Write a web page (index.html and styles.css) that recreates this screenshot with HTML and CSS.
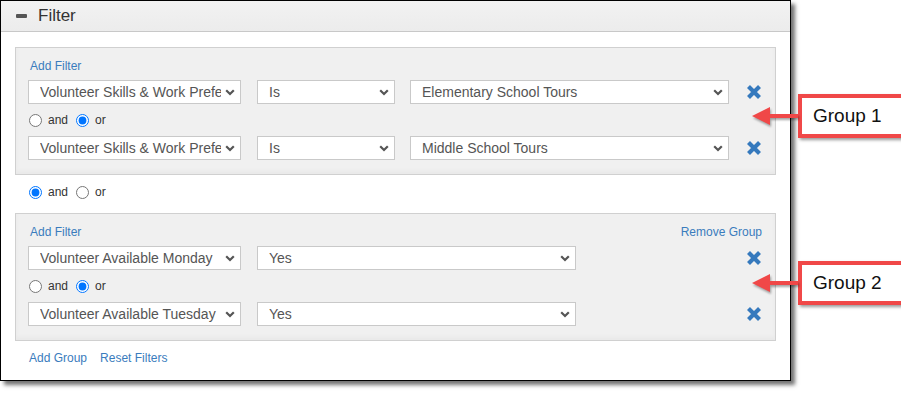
FILE: index.html
```html
<!DOCTYPE html>
<html lang="en">
<head>
    <meta charset="UTF-8">
    <title>Filter</title>
    <link rel="stylesheet" href="styles.css">
</head>
<body>

    <div class="panel">
        <div class="panel-head">
            <span class="collapse-icon"></span>
            <span class="panel-title">Filter</span>
        </div>
        <div class="panel-body">

            <div class="group">
                <div class="group-top">
                    <a class="link" href="#">Add Filter</a>
                </div>
                <div class="filter-row">
                    <div class="select field"><span class="select-text">Volunteer Skills &amp; Work Preferences</span><svg class="chevron" width="10" height="7" viewBox="0 0 10 7"><path d="M1.2 1.2 L5 5 L8.8 1.2" /></svg></div>
                    <div class="select op"><span class="select-text">Is</span><svg class="chevron" width="10" height="7" viewBox="0 0 10 7"><path d="M1.2 1.2 L5 5 L8.8 1.2" /></svg></div>
                    <div class="select value"><span class="select-text">Elementary School Tours</span><svg class="chevron" width="10" height="7" viewBox="0 0 10 7"><path d="M1.2 1.2 L5 5 L8.8 1.2" /></svg></div>
                    <svg class="remove" width="16" height="16" viewBox="0 0 16 16"><path d="M2.5 2.5 L13.5 13.5 M13.5 2.5 L2.5 13.5" /></svg>
                </div>
                <div class="conj">
                    <label><input type="radio" name="c1"> and</label>
                    <label><input type="radio" name="c1" checked> or</label>
                </div>
                <div class="filter-row">
                    <div class="select field"><span class="select-text">Volunteer Skills &amp; Work Preferences</span><svg class="chevron" width="10" height="7" viewBox="0 0 10 7"><path d="M1.2 1.2 L5 5 L8.8 1.2" /></svg></div>
                    <div class="select op"><span class="select-text">Is</span><svg class="chevron" width="10" height="7" viewBox="0 0 10 7"><path d="M1.2 1.2 L5 5 L8.8 1.2" /></svg></div>
                    <div class="select value"><span class="select-text">Middle School Tours</span><svg class="chevron" width="10" height="7" viewBox="0 0 10 7"><path d="M1.2 1.2 L5 5 L8.8 1.2" /></svg></div>
                    <svg class="remove" width="16" height="16" viewBox="0 0 16 16"><path d="M2.5 2.5 L13.5 13.5 M13.5 2.5 L2.5 13.5" /></svg>
                </div>
            </div>

            <div class="conj outer">
                <label><input type="radio" name="c0" checked> and</label>
                <label><input type="radio" name="c0"> or</label>
            </div>

            <div class="group">
                <div class="group-top">
                    <a class="link" href="#">Add Filter</a>
                    <a class="link" href="#">Remove Group</a>
                </div>
                <div class="filter-row">
                    <div class="select field"><span class="select-text">Volunteer Available Monday</span><svg class="chevron" width="10" height="7" viewBox="0 0 10 7"><path d="M1.2 1.2 L5 5 L8.8 1.2" /></svg></div>
                    <div class="select value"><span class="select-text">Yes</span><svg class="chevron" width="10" height="7" viewBox="0 0 10 7"><path d="M1.2 1.2 L5 5 L8.8 1.2" /></svg></div>
                    <svg class="remove push" width="16" height="16" viewBox="0 0 16 16"><path d="M2.5 2.5 L13.5 13.5 M13.5 2.5 L2.5 13.5" /></svg>
                </div>
                <div class="conj">
                    <label><input type="radio" name="c2"> and</label>
                    <label><input type="radio" name="c2" checked> or</label>
                </div>
                <div class="filter-row">
                    <div class="select field"><span class="select-text">Volunteer Available Tuesday</span><svg class="chevron" width="10" height="7" viewBox="0 0 10 7"><path d="M1.2 1.2 L5 5 L8.8 1.2" /></svg></div>
                    <div class="select value"><span class="select-text">Yes</span><svg class="chevron" width="10" height="7" viewBox="0 0 10 7"><path d="M1.2 1.2 L5 5 L8.8 1.2" /></svg></div>
                    <svg class="remove push" width="16" height="16" viewBox="0 0 16 16"><path d="M2.5 2.5 L13.5 13.5 M13.5 2.5 L2.5 13.5" /></svg>
                </div>
            </div>

            <div class="panel-foot">
                <a class="link" href="#">Add Group</a>
                <a class="link" href="#">Reset Filters</a>
            </div>
        </div>
    </div>

    <!-- Callouts -->
    <div class="callout callout-1">
        <svg class="callout-arrow" width="46" height="22" viewBox="0 0 46 22"><polygon points="0,11 18,2 18,20" /><rect x="16" y="9" width="30" height="4" /></svg>
        <div class="callout-box">Group 1</div>
    </div>
    <div class="callout callout-2">
        <svg class="callout-arrow" width="46" height="22" viewBox="0 0 46 22"><polygon points="0,11 18,2 18,20" /><rect x="16" y="9" width="30" height="4" /></svg>
        <div class="callout-box">Group 2</div>
    </div>

</body>
</html>
```

FILE: styles.css
```css
body {
    margin: 0;
    font-family: 'Liberation Sans', Arial, sans-serif;
    background: #fff;
    width: 901px;
    height: 396px;
    position: relative;
    overflow: hidden;
}
.panel {
    width: 789px;
    height: 379px;
    border: 1px solid #000;
    background: #fff;
    box-shadow: 4px 4px 4px rgba(0, 0, 0, 0.55);
}
.panel-head {
    height: 30px;
    display: flex;
    align-items: center;
    background: linear-gradient(#f2f2f2, #ececec);
    border-bottom: 1px solid #c8c8c8;
    padding-left: 15px;
}
.collapse-icon {
    width: 11px;
    height: 4px;
    border-radius: 1px;
    background: #555;
    margin-right: 11px;
}
.panel-title {
    font-size: 17px;
    color: #333;
}
.panel-body {
    padding: 15px 14px 14px 14px;
}
.group {
    background: #f0f0f0;
    border: 1px solid #d0d0d0;
    box-shadow: inset 0 -3px 4px rgba(0, 0, 0, 0.03);
    padding: 10px 13px 14px 12px;
}
.group-top {
    height: 16px;
    display: flex;
    justify-content: space-between;
    align-items: center;
    margin-bottom: 6px;
}
.link {
    font-size: 12px;
    color: #3a7cbd;
    text-decoration: none;
    padding-left: 2px;
}
.filter-row {
    display: flex;
    align-items: center;
    gap: 16px;
}
.select {
    border: 1px solid #c9c9c9;
    background: #fff;
    display: flex;
    align-items: center;
    padding: 0 5px 0 11px;
    box-sizing: border-box;
    height: 24px;
}
.select-text {
    flex: 1;
    font-size: 14px;
    color: #555;
    white-space: nowrap;
    overflow: hidden;
}
.chevron {
    flex: none;
    margin-left: 4px;
}
.chevron path {
    fill: none;
    stroke: #555;
    stroke-width: 2.2;
}
.select.field {
    width: 213px;
}
.select.op {
    width: 138px;
    margin-right: -1px;
}
.select.value {
    width: 319px;
}
.remove {
    margin-left: 1px;
}
.remove.push {
    margin-left: auto;
}
.remove path {
    stroke: #3579bd;
    stroke-width: 4.2;
    fill: none;
}
.conj {
    height: 20px;
    margin: 6px 0;
    display: flex;
    align-items: center;
    font-size: 12px;
    color: #333;
}
.conj.outer {
    margin: 7px 0 11px 0;
    padding-left: 13px;
}
.conj label {
    display: flex;
    align-items: center;
    margin-right: 8px;
}
.conj input {
    margin: 0 6px 0 1px;
    width: 13px;
    height: 13px;
}
.conj label + label input {
    margin-left: 0;
}
.panel-foot {
    display: flex;
    gap: 12px;
    margin-top: 9px;
    padding-left: 13px;
    height: 16px;
    align-items: center;
}
.panel-foot .link {
    padding-left: 1px;
}
/* Callouts over the screenshot */
.callout {
    position: absolute;
    left: 752px;
    display: flex;
    align-items: center;
}
.callout-1 {
    top: 94px;
}
.callout-2 {
    top: 261px;
}
.callout-arrow {
    filter: drop-shadow(1px 2px 1px rgba(0, 0, 0, 0.35));
}
.callout-arrow polygon,
.callout-arrow rect {
    fill: #f04848;
}
.callout-box {
    width: 94px;
    height: 36px;
    border: 4px solid #f04848;
    background: #fff;
    box-shadow: 2px 2px 3px rgba(0, 0, 0, 0.4);
    font-size: 19px;
    color: #111;
    display: flex;
    align-items: center;
    padding-left: 11px;
    box-sizing: content-box;
}
```
